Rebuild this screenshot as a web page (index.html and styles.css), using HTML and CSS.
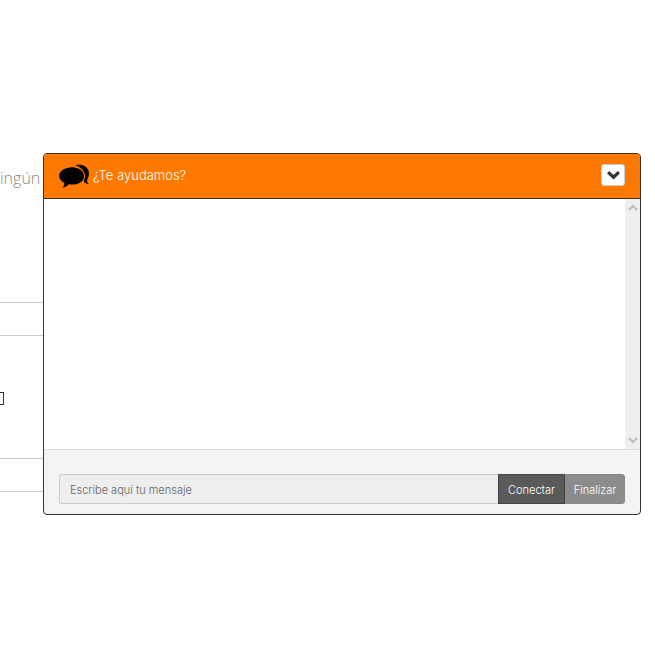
FILE: index.html
```html
<!DOCTYPE html>
<html lang="en">
<head>
    <meta charset="UTF-8">
    <title>¿Te ayudamos?</title>
    <link rel="stylesheet" href="styles.css">
</head>
<body>
    <div class="page-behind">
        <p class="cut-text">ingún</p>
        <div class="line-row first-row"></div>
        <div class="check-box"></div>
        <div class="line-row second-row"></div>
    </div>

    <div class="chat">
        <div class="chat-header">
            <svg class="chat-icon" width="31" height="25" viewBox="0 0 32 26">
                <path d="M17 1.200c6.500-1.400 12.800 1 13.800 6.800 .6 3.500-.6 6.700-2 9 .3 1.500 1 2.800 2 3.700-2 0-3.600-.7-4.800-1.900l-.6-1.100c1.600-2.500 2.100-5.800 .9-8.700-1.500-3.700-5-6.500-9.300-7.800z"/>
                <path d="M13.500 3.300c7.200 0 12.500 3.900 12.500 9.100s-5.300 9-12.200 9c-1.300 0-2.600-.1-3.800-.4-1.500 1.700-3.700 3.100-6.500 3.800 1.100-1.300 1.900-3 2-5C2.400 18.200 0 15.500 0 12.300 0 7.100 6.300 3.300 13.500 3.300z"/>
            </svg>
            <span class="chat-title">¿Te ayudamos?</span>
            <button class="toggle-btn">
                <svg width="13" height="9" viewBox="0 0 13 9">
                    <path d="M2.200 0L6.500 4 10.800 0 13 2.200 6.500 8.500 0 2.200z"/>
                </svg>
            </button>
        </div>
        <div class="chat-body">
            <div class="messages"></div>
            <div class="scrollbar">
                <svg width="10" height="6" viewBox="0 0 10 6"><path d="M1 5l4-4 4 4" /></svg>
                <svg width="10" height="6" viewBox="0 0 10 6"><path d="M1 1l4 4 4-4" /></svg>
            </div>
        </div>
        <div class="chat-footer">
            <div class="input-group">
                <input class="msg-input" type="text" placeholder="Escribe aquí tu mensaje">
                <button class="btn btn-connect">Conectar</button>
                <button class="btn btn-end">Finalizar</button>
            </div>
        </div>
    </div>
</body>
</html>
```

FILE: styles.css
```css
* {
    padding: 0;
    margin: 0;
    box-sizing: border-box;
}
body {
    width: 655px;
    height: 655px;
    overflow: hidden;
    background-color: #fff;
    font-family: "Inter", "Liberation Sans", sans-serif;
    position: relative;
}
.page-behind {
    width: 60px;
    padding-top: 167px;
}
.cut-text {
    font-family: "Open Sans", sans-serif;
    font-weight: 300;
    font-size: 16px;
    line-height: 22px;
    color: #8a8a8a;
    white-space: nowrap;
}
.line-row {
    height: 34px;
    border-top: 1px solid #ccc;
    border-bottom: 1px solid #ccc;
}
.first-row {
    margin-top: 113px;
}
.second-row {
    margin-top: 53px;
}
.check-box {
    width: 4px;
    height: 13px;
    margin-top: 56px;
    border: 1px solid #333;
    border-left: 0;
}
.chat {
    position: absolute;
    left: 43px;
    top: 153px;
    width: 598px;
    height: 362px;
    display: flex;
    flex-direction: column;
    background-color: #f4f4f4;
    border: 1px solid #333;
    border-radius: 4px;
}
.chat-header {
    height: 45px;
    display: flex;
    align-items: center;
    padding: 0 15px;
    background-color: #ff7800;
    border-bottom: 1px solid #333;
    border-radius: 3px 3px 0 0;
}
.chat-icon {
    flex: none;
    fill: #000;
}
.chat-title {
    margin-left: 3px;
    margin-top: -2px;
    font-size: 13px;
    font-weight: 300;
    color: #fff;
}
.toggle-btn {
    margin-left: auto;
    margin-top: -2px;
    width: 24px;
    height: 22px;
    display: flex;
    align-items: center;
    justify-content: center;
    background-color: #fff;
    border: 1px solid #ccc;
    border-radius: 3px;
}
.toggle-btn svg {
    fill: #333;
}
.chat-body {
    height: 251px;
    display: flex;
    background-color: #fff;
    border-bottom: 1px solid #ddd;
}
.messages {
    flex: 1;
}
.scrollbar {
    width: 15px;
    display: flex;
    flex-direction: column;
    justify-content: space-between;
    align-items: center;
    padding: 6px 0;
    background-color: #eee;
}
.scrollbar svg {
    fill: none;
    stroke: #bbb;
    stroke-width: 2;
}
.chat-footer {
    flex: 1;
    padding: 24px 15px 0;
}
.input-group {
    height: 30px;
    display: flex;
}
.msg-input {
    flex: 1;
    min-width: 0;
    padding: 2px 10px 0;
    font-family: inherit;
    font-size: 11px;
    font-weight: 300;
    background-color: #eee;
    border: 1px solid #ccc;
    border-right: 0;
    border-radius: 3px 0 0 3px;
}
.msg-input::placeholder {
    color: #666;
    opacity: 1;
}
.btn {
    height: 30px;
    padding-top: 1px;
    font-family: inherit;
    font-size: 11px;
    font-weight: 300;
    color: #fff;
}
.btn-connect {
    width: 67px;
    background-color: #5a5a5a;
    border: 1px solid #444;
}
.btn-end {
    width: 60px;
    background-color: #8c8c8c;
    border: 1px solid #888;
    border-radius: 0 3px 3px 0;
}
```
